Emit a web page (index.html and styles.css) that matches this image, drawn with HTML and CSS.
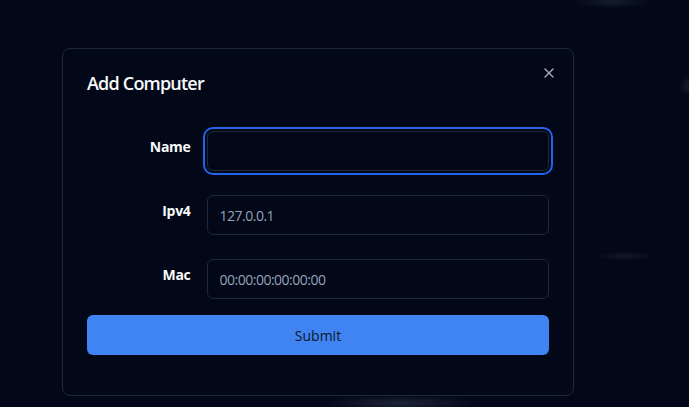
FILE: index.html
```html
<!DOCTYPE html>
<html lang="en">
<head>
<meta charset="utf-8">
<title>Add Computer</title>
<link rel="stylesheet" href="styles.css">
</head>
<body>
<div class="overlay">
  <div class="dialog" role="dialog" aria-labelledby="dlg-title">
    <h2 class="dialog-title" id="dlg-title">Add Computer</h2>
    <button class="close" type="button" aria-label="Close">
      <svg viewBox="0 0 24 24" width="16" height="16" fill="none" stroke="currentColor" stroke-width="2" stroke-linecap="round" stroke-linejoin="round"><path d="M18 6 6 18"/><path d="m6 6 12 12"/></svg>
    </button>
    <form class="form">
      <div class="row">
        <label class="label" for="name">Name</label>
        <input class="input focused" id="name" type="text">
      </div>
      <div class="row">
        <label class="label" for="ipv4">Ipv4</label>
        <input class="input" id="ipv4" type="text" placeholder="127.0.0.1">
      </div>
      <div class="row">
        <label class="label" for="mac">Mac</label>
        <input class="input" id="mac" type="text" placeholder="00:00:00:00:00:00">
      </div>
      <button class="submit" type="button">Submit</button>
    </form>
  </div>
</div>
</body>
</html>
```

FILE: styles.css
```css
* { box-sizing: border-box; }

html, body {
  margin: 0;
  height: 100%;
}

body {
  background-color: #020817;
  background-image:
    radial-gradient(ellipse 40px 6px at 612px 2px, rgba(60, 70, 90, 0.35), transparent),
    radial-gradient(ellipse 80px 8px at 400px 403px, rgba(60, 70, 90, 0.45), transparent),
    radial-gradient(ellipse 30px 5px at 625px 256px, rgba(60, 70, 90, 0.25), transparent),
    radial-gradient(ellipse 10px 10px at 689px 86px, rgba(60, 70, 90, 0.35), transparent);
  font-family: "Open Sans", "Noto Sans", sans-serif;
  color: #f8fafc;
  overflow: hidden;
}

.overlay {
  padding: 48px 0 0 62px;
}

.dialog {
  position: relative;
  width: 512px;
  height: 348px;
  background: #020817;
  border: 1px solid #1e293b;
  border-radius: 8px;
  padding: 24px;
}

.dialog-title {
  margin: -2px 0 0;
  font-size: 18px;
  line-height: 24px;
  font-weight: 600;
  letter-spacing: -0.8px;
  color: #f8fafc;
}

.close {
  position: absolute;
  top: 16px;
  right: 16px;
  width: 16px;
  height: 16px;
  padding: 0;
  border: 0;
  background: none;
  color: #a3abb9;
  display: flex;
}

.form {
  margin-top: 36px;
  display: flex;
  flex-direction: column;
  gap: 24px;
}

.row {
  display: grid;
  grid-template-columns: 103.5px 1fr;
  column-gap: 16px;
  align-items: start;
}

.label {
  text-align: right;
  font-size: 14px;
  font-weight: 700;
  line-height: 20px;
  padding-top: 6px;
  letter-spacing: -0.3px;
  color: #f8fafc;
}

.input {
  height: 40px;
  width: 100%;
  border: 1px solid #1e293b;
  border-radius: 6px;
  background: #020817;
  padding: 0 12px;
  font-family: inherit;
  font-size: 14px;
  letter-spacing: -0.5px;
  color: #f8fafc;
  outline: none;
}

.input::placeholder {
  color: #94a3b8;
}

.input.focused {
  box-shadow: 0 0 0 2px #020817, 0 0 0 4px #2563eb;
}

.submit {
  margin-top: -8px;
  height: 40px;
  width: 100%;
  border: 0;
  border-radius: 6px;
  background: #3f84f2;
  color: #0f172a;
  font-family: inherit;
  font-size: 14px;
  font-weight: 500;
}
```
